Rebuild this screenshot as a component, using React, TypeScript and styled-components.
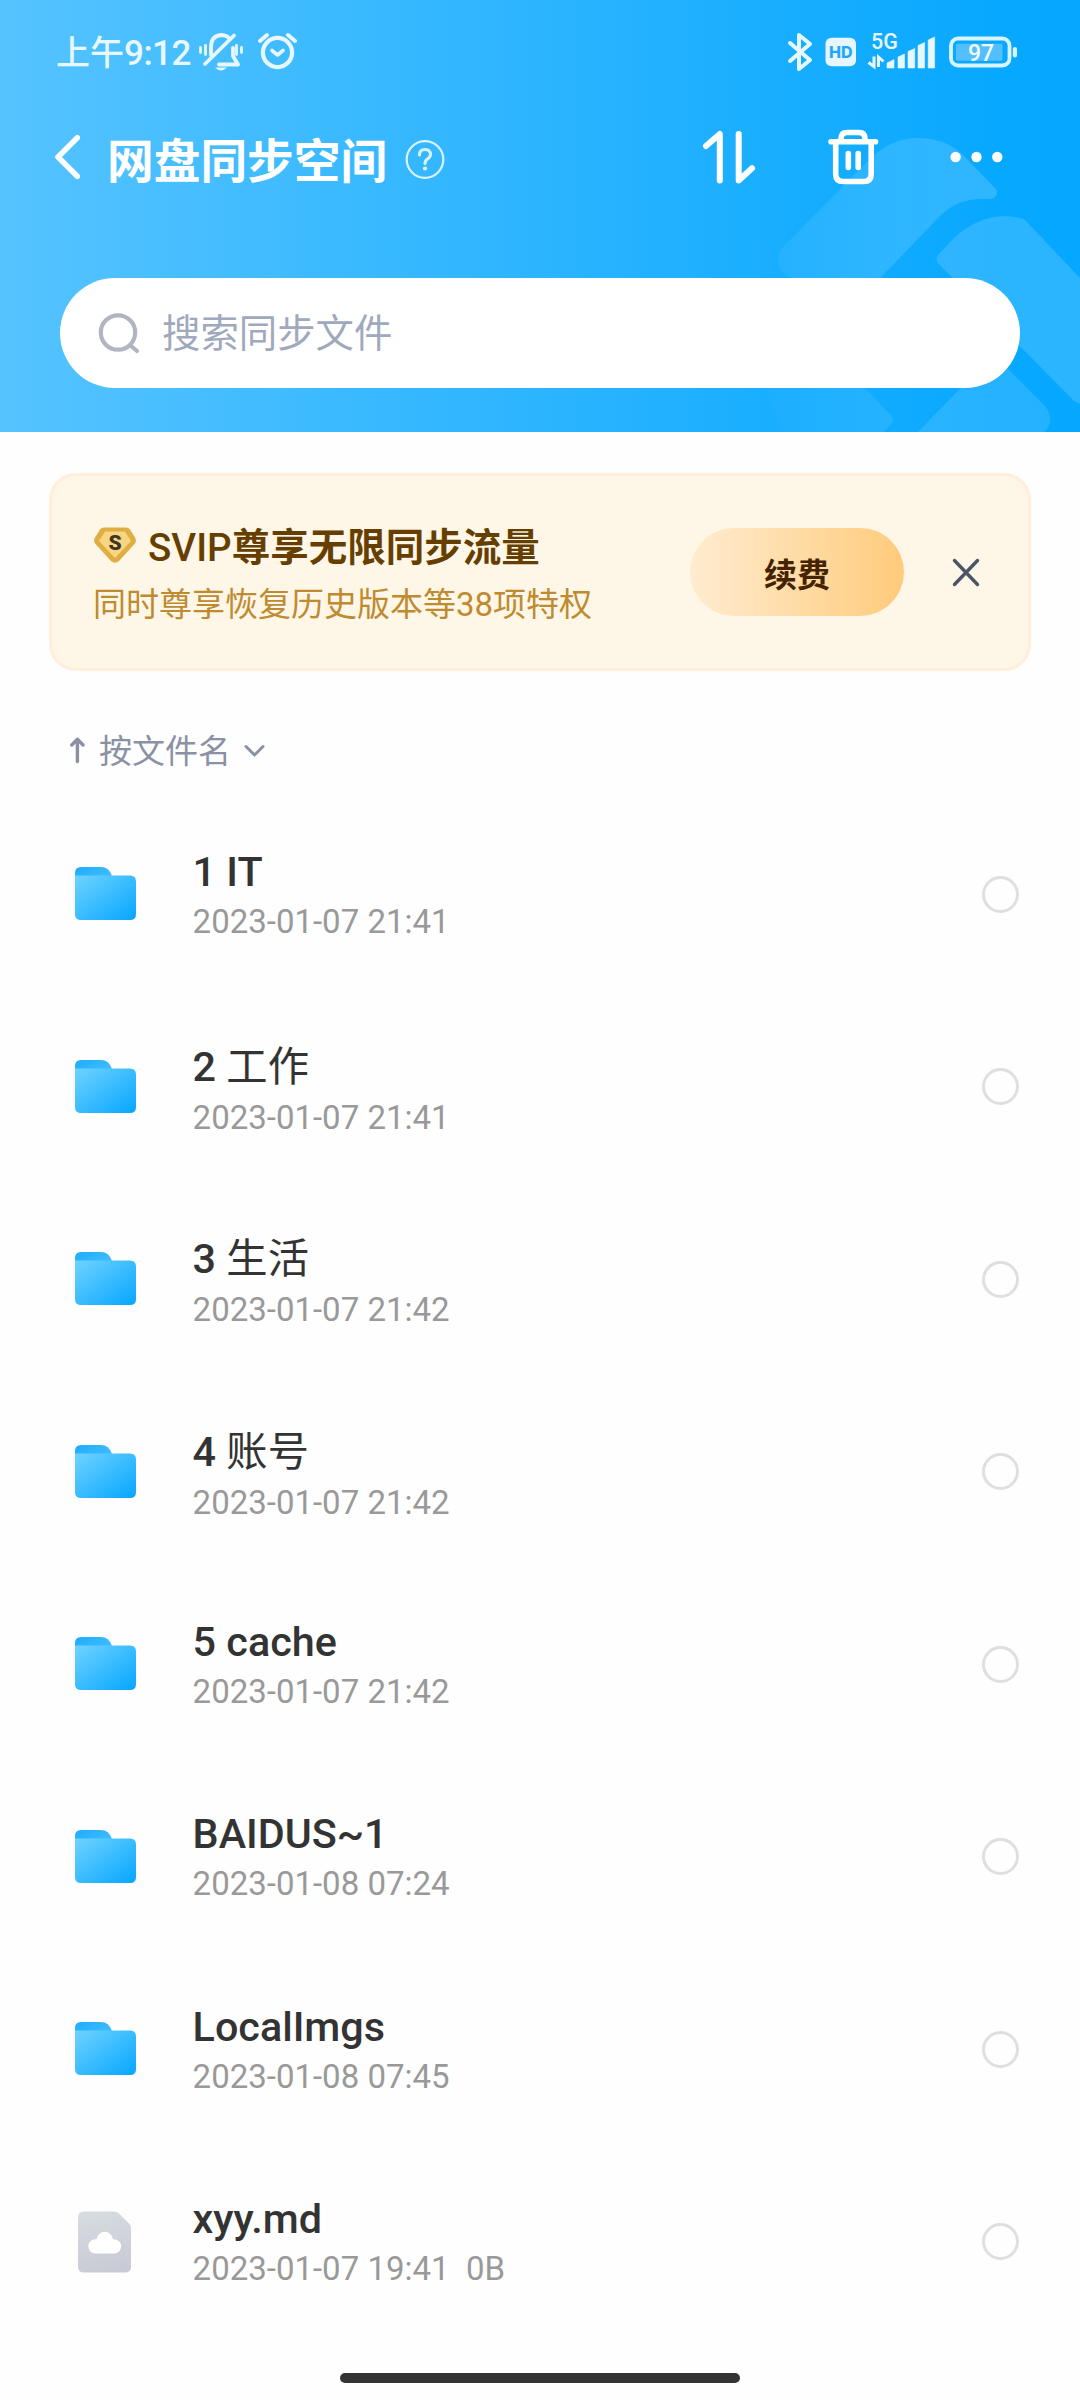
import React from "react";
import styled, { createGlobalStyle } from "styled-components";

const Global = createGlobalStyle`
  * { box-sizing: border-box; }
  body { margin: 0; background: #fefefe; font-family: Roboto, "Noto Sans CJK SC", sans-serif; }
`;

const Screen = styled.div`
  width: 1080px;
  height: 2400px;
  display: flex;
  flex-direction: column;
  background: #fefefe;
  overflow: hidden;
`;

const SharedDefs = styled.svg`
  position: absolute;
  width: 0;
  height: 0;
`;

const Header = styled.header`
  position: relative;
  height: 432px;
  flex: none;
  display: flex;
  flex-direction: column;
  background: linear-gradient(90deg, #56c3ff 0%, #07a8ff 93%, #06a7ff 100%);
  color: #fff;
`;

const Watermark = styled.svg`
  position: absolute;
  inset: 0;
`;

const StatusBar = styled.div`
  position: relative;
  height: 104px;
  padding: 0 62px 0 56px;
  display: flex;
  justify-content: space-between;
  align-items: center;
`;

const StatusGroup = styled.div`
  display: flex;
  align-items: center;
  height: 104px;
`;

const Clock = styled.span`
  width: 143px;
  padding-top: 2px;
  font-size: 34px;
  line-height: 50px;
  font-weight: 500;
  color: #e9f8ff;
  white-space: nowrap;
`;

const Digits = styled.span`
  font-size: 35px;
  letter-spacing: -0.5px;
`;

const TitleBar = styled.div`
  position: relative;
  height: 106px;
  padding: 0 73px 0 52px;
  display: flex;
  align-items: center;
`;

const Title = styled.h1`
  margin: 0 0 0 21px;
  padding-top: 9px;
  width: 296px;
  font-size: 46.7px;
  line-height: 64px;
  font-weight: 700;
  white-space: nowrap;
`;

const Actions = styled.div`
  margin-left: auto;
  display: flex;
  align-items: center;
  gap: 64px;
`;

const SearchBox = styled.div`
  position: relative;
  margin: 68px 60px 0;
  height: 110px;
  border-radius: 55px;
  background: #fff;
  display: flex;
  align-items: center;
  padding-left: 36px;
  gap: 20px;
  color: #9fa9bd;
  font-size: 38.4px;
  line-height: 56px;
`;

const Placeholder = styled.span`
  padding-top: 2px;
`;

const Banner = styled.section`
  margin: 41px 49px 0;
  height: 198px;
  flex: none;
  border: 3px solid #feeeda;
  border-radius: 27px;
  background: #fef7e8;
  display: flex;
  align-items: center;
  padding: 0 44px 0 41px;
`;

const BannerText = styled.div`
  flex: 1;
  padding-top: 6px;
`;

const BannerTitle = styled.div`
  display: flex;
  align-items: center;
  gap: 11px;
  height: 57px;
  font-size: 38.5px;
  line-height: 56px;
  font-weight: 500;
  color: #663f00;
  white-space: nowrap;
`;

const Strong = styled.span`
  padding-top: 2px;

  b { font-weight: 700; }
`;

const BannerSub = styled.div`
  padding-top: 2px;
  font-size: 33px;
  line-height: 54px;
  color: #be8b30;
  white-space: nowrap;
`;

const Renew = styled.button`
  width: 214px;
  height: 88px;
  margin-right: 44px;
  padding: 7px 0 0;
  border: 0;
  border-radius: 44px;
  background: linear-gradient(90deg, #ffecd0, #ffcb7c);
  font: 700 33px/48px Roboto, "Noto Sans CJK SC", sans-serif;
  color: #452300;
`;

const SortBar = styled.div`
  height: 127px;
  flex: none;
  padding: 35px 0 0 70px;
  display: flex;
  align-items: flex-start;
  color: #8a91a3;
  font-size: 33px;

  svg { margin-top: 30px; }
`;

const SortLabel = styled.span`
  margin: 0 11px 0 14px;
  line-height: 92px;
`;

const List = styled.div`
  height: 1540px;
  flex: none;
  display: grid;
  grid-template-rows: repeat(8, 1fr);
`;

const Row = styled.div`
  display: flex;
  align-items: center;
  padding: 0 61px 0 74px;
`;

const IconCell = styled.div`
  width: 118.6px;
  display: flex;
`;

const FileText = styled.div<{ $cjk: boolean }>`
  flex: 1;
  padding-top: ${(p) => (p.$cjk ? 9 : 3)}px;
  display: flex;
  flex-direction: column;
  gap: ${(p) => (p.$cjk ? 3 : 2)}px;
`;

const FileName = styled.div`
  font-size: 41.3px;
  line-height: 49px;
  font-weight: 500;
  color: #333;

  span { font-weight: 400; }
`;

const FileMeta = styled.div`
  font-size: 33px;
  line-height: 45px;
  color: #999;
  white-space: pre;
`;

const Radio = styled.span`
  width: 37px;
  height: 37px;
  border: 3.4px solid #dfdfdf;
  border-radius: 50%;
`;

const HomeBar = styled.div`
  width: 400px;
  height: 10px;
  margin: 35px auto 0;
  border-radius: 5px;
  background: #333;
`;

const files = [
  { latin: "1 IT", cjk: "", meta: "2023-01-07 21:41" },
  { latin: "2 ", cjk: "工作", meta: "2023-01-07 21:41" },
  { latin: "3 ", cjk: "生活", meta: "2023-01-07 21:42" },
  { latin: "4 ", cjk: "账号", meta: "2023-01-07 21:42" },
  { latin: "5 cache", cjk: "", meta: "2023-01-07 21:42" },
  { latin: "BAIDUS~1", cjk: "", meta: "2023-01-08 07:24" },
  { latin: "LocalImgs", cjk: "", meta: "2023-01-08 07:45" },
  { latin: "xyy.md", cjk: "", meta: "2023-01-07 19:41  0B", file: true },
];

const FolderIcon = () => (
  <svg width="64" height="56" viewBox="74 866 64 56">
    <path d="M75 880v-7q0-6 6-6h20q8 0 11 9l0 4z" fill="url(#folderBack)" />
    <path d="M75 875.500H130q6 0 6 6V914q0 6-6 6H81q-6 0-6-6z" fill="url(#folderFront)" />
  </svg>
);

const FileIcon = () => (
  <svg width="64" height="62" viewBox="74 2210.5 64 62">
    <path d="M84 2211h30q3 0 5 2l10 10q2 2 2 5v38q0 6-6 6H84q-6 0-6-6v-49q0-6 6-6z" fill="url(#fileFill)" />
    <path d="M95.500 2253a7 7 0 0 1 0-14.300h1a8.300 8.300 0 0 1 16.500 0h1a7 7 0 0 1 0 14.300z" fill="#fff" />
  </svg>
);

const Gradients = () => (
  <SharedDefs>
    <defs>
      <linearGradient id="folderBack" x1="0" y1="0" x2="1" y2="0.600">
        <stop offset="0" stopColor="#1eacfc" />
        <stop offset="1" stopColor="#40bcff" />
      </linearGradient>
      <linearGradient id="folderFront" x1="0" y1="0" x2="1" y2="1">
        <stop offset="0" stopColor="#6fd3ff" />
        <stop offset="1" stopColor="#06a6ff" />
      </linearGradient>
      <linearGradient id="fileFill" x1="0.300" y1="0" x2="0.500" y2="1">
        <stop offset="0" stopColor="#d6dce0" />
        <stop offset="1" stopColor="#c9cad5" />
      </linearGradient>
      <linearGradient id="markFade" x1="0" y1="0" x2="1" y2="0">
        <stop offset="0" stopColor="#fff" stopOpacity="0.010" />
        <stop offset="1" stopColor="#fff" stopOpacity="0.090" />
      </linearGradient>
      <linearGradient id="markLeft" x1="0" y1="0" x2="1" y2="0">
        <stop offset="0" stopColor="#fff" stopOpacity="0.050" />
        <stop offset="0.450" stopColor="#fff" stopOpacity="0.120" />
        <stop offset="1" stopColor="#fff" stopOpacity="0.160" />
      </linearGradient>
    </defs>
  </SharedDefs>
);

export default function App() {
  return (
    <Screen>
      <Global />
      <Gradients />
      <Header>
        <Watermark width="1080" height="432" viewBox="0 0 1080 432" fill="#fff">
          <path fill="url(#markLeft)" d="M784 246L868 161Q890 138 917 138Q946 138 963 155L995 188Q999 192 995 197Q993 199 988 199H982Q955 199 937 219L840 320L788 277Q770 262 784 246z" />
          <path fillOpacity="0.150" d="M938 255Q935 259 938 263L1074 401L1080 404V278L1026 221Q1024 218.500 1020 218Q985 210 955 237z" />
          <path fillOpacity="0.120" d="M1007 368L1044 405Q1056 418 1045 432H918L980 368z" />
          <path fill="url(#markFade)" d="M763 380H857L891 415Q895 420 891 424L884 432H782z" />
        </Watermark>
        <StatusBar>
          <StatusGroup>
            <Clock>上午<Digits>9:12</Digits></Clock>
            <svg width="98" height="44" viewBox="199 31 98 44" fill="none" stroke="#e6f7ff" strokeLinecap="round" strokeLinejoin="round">
              <path d="M211 56V48q0-11 10-12q5 0 8 3M233 49v8l5 8.500H219M205 65L234 36.500" strokeWidth="3.800" />
              <path d="M200.500 48.500v5M205.500 46.500v9M236.500 46.500v9M241.500 48.500v5" strokeWidth="2.800" />
              <path d="M215 68.500h12q-6 6-12 0z" fill="#e6f7ff" stroke="none" />
              <circle cx="277.500" cy="53.500" r="14.600" strokeWidth="4.200" />
              <path d="M272 51.500l5.500 4.500 5.500-4.500" strokeWidth="3.600" />
              <path d="M260 42l7-6M295 42l-7-6" strokeWidth="4" />
            </svg>
          </StatusGroup>
          <StatusGroup>
            <svg width="231" height="64" viewBox="787 20 231 64">
              <path d="M790 43L810 60L799 69V35L810 44L790 61" fill="none" stroke="#e6f7ff" strokeWidth="4" strokeLinecap="round" strokeLinejoin="round" />
              <rect x="825.500" y="37.700" width="30.500" height="28.500" rx="6" fill="#e6f5ff" />
              <text x="840.800" y="58" textAnchor="middle" fontFamily="Inter, sans-serif" fontWeight="800" fontSize="16" fill="#1fa9fb">HD</text>
              <text x="871" y="48.600" fontFamily="Roboto, sans-serif" fontWeight="500" fontSize="21.500" fill="#e6f7ff">5G</text>
              <path d="M868.500 62.500l5.500 4V56.500M878.500 67V57l5 4.500" fill="none" stroke="#e6f7ff" strokeWidth="3" />
              <path d="M887 68v-5l7-3.500V68zM898 68V57l6.500-3V68zM908 68V51.500l6.700-3V68zM918 68V45.500l6.600-3V68zM928.200 68V40l6.400-3V68z" fill="#e6f7ff" stroke="#e6f7ff" strokeWidth="0.600" strokeLinejoin="round" />
              <rect x="951" y="38.500" width="58.500" height="27" rx="7" fill="none" stroke="#d8f5ff" strokeWidth="3.800" />
              <rect x="956" y="43.700" width="46.500" height="17" rx="2" fill="#53bfff" />
              <rect x="1012.800" y="47" width="4.200" height="10.500" rx="2" fill="#d8f5ff" />
              <text x="981" y="61.300" textAnchor="middle" fontFamily="Roboto, sans-serif" fontWeight="500" fontSize="23" fill="#f2fbff">97</text>
            </svg>
          </StatusGroup>
        </StatusBar>
        <TitleBar>
          <svg width="34" height="56" viewBox="52 129 34 56" fill="none" stroke="#fff" strokeWidth="5.500" strokeLinecap="round" strokeLinejoin="round">
            <path d="M77.300 137.700L58 157L77.300 176.300" />
          </svg>
          <Title>网盘同步空间</Title>
          <svg width="44" height="44" viewBox="403 133 44 44" fill="none" stroke="#d9f2ff" strokeLinecap="round">
            <circle cx="425" cy="157.500" r="18.300" strokeWidth="2.200" />
            <path d="M419.500 153q0-5.500 5.500-5.500t5.500 5q0 2.500-3 4.500q-2.500 1.600-2.500 4.500" strokeWidth="3" />
            <circle cx="425" cy="166.500" r="2.100" fill="#d9f2ff" stroke="none" />
          </svg>
          <Actions>
            <svg width="60" height="60" viewBox="699 127 60 60" fill="none" stroke="#fff" strokeWidth="6" strokeLinecap="round" strokeLinejoin="round">
              <path d="M706 146L719.800 134V180.500M738.700 134V180.500L752 168.300" />
            </svg>
            <svg width="60" height="60" viewBox="823 127 60 60" fill="none" stroke="#fff" strokeWidth="5.600" strokeLinecap="round" strokeLinejoin="round">
              <path d="M831 141.700H875.500M835.700 142V174q0 7.500 7.500 7.500h20.500q7.500 0 7.500-7.500V142M841 141v-2q0-6.500 6-6.500h12q6 0 6 6.500V141M848.300 153.500V167.500M858.200 153.500V167.500" />
            </svg>
            <svg width="60" height="60" viewBox="947 127 60 60" fill="#fff">
              <circle cx="955.600" cy="157" r="5.200" />
              <circle cx="976.500" cy="157" r="5.200" />
              <circle cx="997.300" cy="157" r="5.200" />
            </svg>
          </Actions>
        </TitleBar>
        <SearchBox>
          <svg width="46" height="46" viewBox="96 309.500 46 46" fill="none" stroke="#b1b4c1" strokeWidth="4.200" strokeLinecap="round">
            <circle cx="118" cy="332" r="17.200" />
            <path d="M130.500 345l6.500 5.500" />
          </svg>
          <Placeholder>搜索同步文件</Placeholder>
        </SearchBox>
      </Header>
      <Banner>
        <BannerText>
          <BannerTitle>
            <svg width="44" height="40" viewBox="92 527.500 44 40">
              <path d="M103 528h22q2.500 0 4 2l5 8q2 3.500-.5 6.500l-15.500 17q-4 3.500-8 0L94.500 544.500Q92 541.500 94 538l5-8q1.500-2 4-2z" fill="#dfae43" />
              <path d="M104 532h20l6 9.500L114 558.500L98 541.500z" fill="#f8d583" />
              <text x="114" y="550" textAnchor="middle" fontFamily="Roboto, sans-serif" fontWeight="900" fontSize="21" fill="#3e3526">S</text>
            </svg>
            <Strong>SVIP<b>尊享无限同步流量</b></Strong>
          </BannerTitle>
          <BannerSub>同时尊享恢复历史版本等38项特权</BannerSub>
        </BannerText>
        <Renew>续费</Renew>
        <svg width="36" height="36" viewBox="948 555 36 36" fill="none" stroke="#4b5567" strokeWidth="3.400" strokeLinecap="round">
          <path d="M954.500 561.500L977.500 585.500M977.500 561.500L954.500 585.500" />
        </svg>
      </Banner>
      <SortBar>
        <svg width="15" height="30" viewBox="70 735 15 30" fill="none" stroke="#8a91a3" strokeWidth="3.400" strokeLinecap="round" strokeLinejoin="round">
          <path d="M77.400 760.500V738.500M71.800 744L77.400 738.300L83 744" />
        </svg>
        <SortLabel>按文件名</SortLabel>
        <svg width="24" height="30" viewBox="242 736 24 30" fill="none" stroke="#8a91a3" strokeWidth="3" strokeLinecap="round" strokeLinejoin="round">
          <path d="M246 746.500L254.500 755L263 746.500" />
        </svg>
      </SortBar>
      <List>
        {files.map((f) => (
          <Row key={f.latin}>
            <IconCell>{f.file ? <FileIcon /> : <FolderIcon />}</IconCell>
            <FileText $cjk={f.cjk !== ""}>
              <FileName>{f.latin}<span>{f.cjk}</span></FileName>
              <FileMeta>{f.meta}</FileMeta>
            </FileText>
            <Radio />
          </Row>
        ))}
      </List>
      <HomeBar />
    </Screen>
  );
}
